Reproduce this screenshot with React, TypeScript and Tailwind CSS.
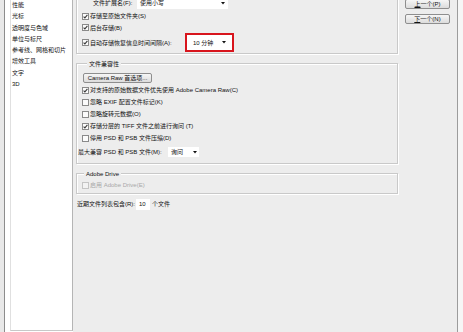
import React from "react";

const CB = ({ checked = false, disabled = false }: { checked?: boolean; disabled?: boolean }) => (
  <svg width="7" height="7" viewBox="0 0 7 7" className="shrink-0">
    <rect x="0.5" y="0.5" width="6" height="6" fill={disabled ? "#f2f2f2" : "#fbfbfb"} stroke={disabled ? "#c4c4c4" : "#8a8a8a"} />
    {checked && <path d="M1.6 3.6 L2.9 4.9 L5.4 1.9" fill="none" stroke="#3a3a3a" strokeWidth="1.1" />}
  </svg>
);

const Arrow = () => (
  <svg width="4" height="3" viewBox="0 0 4 3" className="shrink-0">
    <path d="M0 0 H4 L2 2.6 Z" fill="#111" />
  </svg>
);

const Row = ({ label, checked, disabled }: { label: string; checked?: boolean; disabled?: boolean }) => (
  <div className="h-[12px] flex items-center gap-[1px]">
    <CB checked={checked} disabled={disabled} />
    <span className={disabled ? "text-[#a8a8a8] whitespace-nowrap" : "whitespace-nowrap"}>{label}</span>
  </div>
);

const Btn = ({ children, className = "" }: { children: React.ReactNode; className?: string }) => (
  <div
    className={
      "h-[10px] flex items-center justify-center rounded-[2px] border border-[#8e8e8e] bg-gradient-to-b from-[#f6f6f6] to-[#dcdcdc] whitespace-nowrap " +
      className
    }
  >
    {children}
  </div>
);

const groupCls =
  "relative border border-[#c9c9c9] shadow-[inset_1px_1px_0_#ffffff,1px_1px_0_#ffffff]";

export default function App() {
  const items = ["性能", "光标", "透明度与色域", "单位与标尺", "参考线、网格和切片", "增效工具", "文字", "3D"];
  return (
    <div
      className="w-[463px] h-[332px] overflow-hidden flex bg-[#ededed] text-[6px] leading-[8px] text-[#111111]"
      style={{ fontFamily: '"Liberation Sans", "Noto Sans CJK SC", sans-serif' }}
    >
      {/* left strip */}
      <div className="w-[4px] bg-[#e8e8e8]" />
      {/* list */}
      <div className="w-[69px] border-l border-[#8c8c8c] bg-white pl-[5px]">
        <div className="h-[331px] border-l border-r border-b border-l-[#e0e0e0] border-r-[#b5b5b5] border-b-[#c8c8c8] pl-[1px]">
          {items.map((t) => (
            <div key={t} className="h-[11.3px] leading-[11.3px] whitespace-nowrap">
              {t}
            </div>
          ))}
        </div>
      </div>
      {/* main */}
      <div className="w-[384px] flex pl-[3px]">
        <div className="w-[322px] flex flex-col">
          {/* group 1 */}
          <div className={groupCls + " -mt-[6px] h-[60px] pt-[1px] pl-[5px]"}>
            <div className="h-[14px] flex items-center pl-[11px]">
              <span className="w-[44px] whitespace-nowrap">文件扩展名(F):</span>
              <div className="w-[91px] h-[11px] bg-white flex items-center justify-between pl-[3px] pr-[3px]">
                <span>使用小写</span>
                <Arrow />
              </div>
            </div>
            <Row label="存储至原始文件夹(S)" checked />
            <div className="h-[11px] flex items-center gap-[1px]">
              <CB checked />
              <span className="whitespace-nowrap">后台存储(B)</span>
            </div>
            <div className="h-[19px] flex items-center gap-[1px]">
              <CB checked />
              <span className="w-[94px] whitespace-nowrap">自动存储恢复信息时间间隔(A):</span>
              <div className="w-[49px] h-[19px] border-2 border-[#d8151d] bg-white flex items-center justify-between pl-[6px] pr-[6px]">
                <span className="whitespace-nowrap">10 分钟</span>
                <Arrow />
              </div>
            </div>
          </div>
          {/* group 2 */}
          <div className={groupCls + " mt-[9px] h-[101px] pl-[5px]"}>
            <span className="absolute -top-[4px] left-[10px] px-[2px] bg-[#ededed] whitespace-nowrap">文件兼容性</span>
            <Btn className="mt-[9px] ml-[1px] w-[69px]">Camera Raw 首选项...</Btn>
            <div className="mt-[1px]">
              <Row label="对支持的原始数据文件优先使用 Adobe Camera Raw(C)" checked />
              <Row label="忽略 EXIF 配置文件标记(K)" />
              <Row label="忽略旋转元数据(O)" />
              <Row label="存储分层的 TIFF 文件之前进行询问 (T)" checked />
              <Row label="停用 PSD 和 PSB 文件压缩(D)" />
            </div>
            <div className="mt-[2px] h-[12px] flex items-center -ml-[4px]">
              <span className="w-[88px] whitespace-nowrap">最大兼容 PSD 和 PSB 文件(M):</span>
              <div className="ml-[2px] w-[31px] h-[10px] bg-white flex items-center justify-between pl-[3px] pr-[2px]">
                <span>询问</span>
                <Arrow />
              </div>
            </div>
          </div>
          {/* adobe drive */}
          <div className={groupCls + " mt-[9px] h-[21px] pl-[5px]"}>
            <span className="absolute -top-[4px] left-[7px] px-[2px] bg-[#ededed] whitespace-nowrap">Adobe Drive</span>
            <div className="mt-[5px]">
              <Row label="启用 Adobe Drive(E)" disabled />
            </div>
          </div>
          {/* recent files */}
          <div className="mt-[4px] h-[12px] flex items-center pl-[1px]">
            <span className="w-[59px] whitespace-nowrap">近期文件列表包含(R):</span>
            <div className="w-[14px] h-[11px] bg-white flex items-center pl-[3px]">10</div>
            <span className="ml-[2px] whitespace-nowrap">个文件</span>
          </div>
        </div>
        {/* buttons */}
        <div className="ml-[7px] w-[45px] flex flex-col gap-[5px] -mt-[1px]">
          <Btn>
            <span className="underline">上</span>一个(P)
          </Btn>
          <Btn>
            <span className="underline">下</span>一个(N)
          </Btn>
        </div>
      </div>
      <div className="w-[1px] bg-[#9c9c9c]" />
      <div className="w-[5px] bg-[#f6f6f6]" />
    </div>
  );
}
